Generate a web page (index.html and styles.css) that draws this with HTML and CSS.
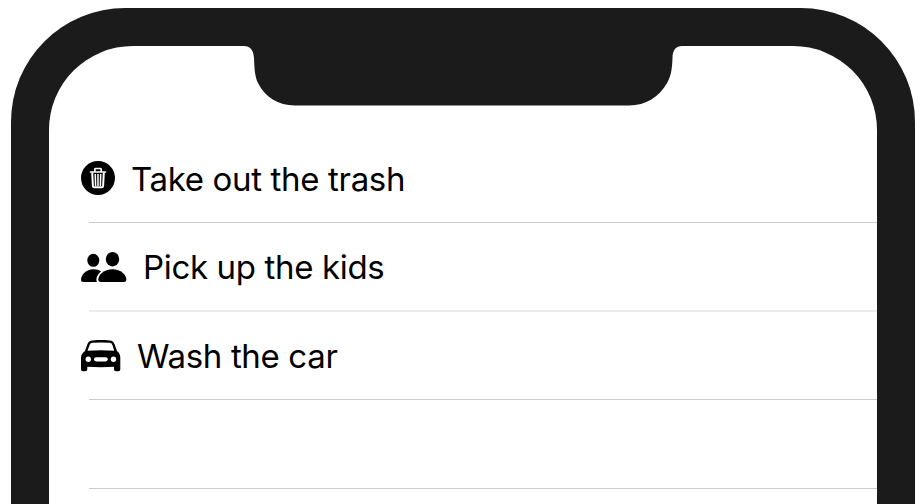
FILE: index.html
```
<!DOCTYPE html>
<html lang="en">
<head>
    <meta charset="UTF-8">
    <meta name="viewport" content="width=device-width, initial-scale=1.0">
    <title>Chores</title>
    <link rel="stylesheet" href="styles.css">
</head>
<body>
    <div class="phone">
        <div class="screen">
            <svg class="notch" width="440" height="60" viewBox="0 0 440 60">
                <path d="M0 0C6 0 9.500 4 10 12C10.500 24 11 31 14 37C21 51 34 59.500 51 59.500H385C402 59.500 415 51 423 37C427 30 428 24 428.500 12C428.500 4 432 0 438 0Z"/>
            </svg>
            <ul class="list">
                <li class="row">
                    <svg class="icon trash" width="34" height="34" viewBox="0 0 34 34">
                        <circle cx="17" cy="17" r="17"/>
                        <g fill="none" stroke="#fff" stroke-linejoin="round">
                            <path stroke-width="1.700" stroke-linecap="round" d="M9.500 11H24.500M13.800 10.500V8.300Q13.800 7.500 14.600 7.500H19.400Q20.200 7.500 20.200 8.300V10.500"/>
                            <path stroke-width="2" d="M11.200 11.500L11.900 25Q12 26.300 13.200 26.300H20.800Q22 26.300 22.100 25L22.800 11.500"/>
                            <path stroke-width="1.500" d="M14.300 13L14.600 25M17 13V25M19.700 13L19.400 25"/>
                        </g>
                    </svg>
                    <span class="label">Take out the trash</span>
                </li>
                <li class="row light">
                    <svg class="icon" width="46" height="31" viewBox="0 0 46 31">
                        <ellipse cx="12.300" cy="8.300" rx="6" ry="6.500"/>
                        <ellipse cx="31.500" cy="7.200" rx="6.700" ry="7.200"/>
                        <path d="M12.500 17.300C15.500 17.300 18 18 20 19.400C17.200 21.600 15.500 24.500 15.400 27.300C15.300 28.400 15.500 29.300 16 30H2.300C.8 30 0 29.300 0 28C0 23 5 17.300 12.500 17.300Z"/>
                        <path d="M31.500 17.200C40 17.200 45.300 23 45.300 27.500C45.300 29.200 44.500 30 42.800 30H20.200C18.300 30 17.300 29.200 17.300 27.500C17.300 23 23 17.200 31.500 17.200Z"/>
                    </svg>
                    <span class="label">Pick up the kids</span>
                </li>
                <li class="row">
                    <svg class="icon" width="40" height="32" viewBox="0 0 40 32">
                        <path fill-rule="evenodd" d="M4 11L6.300 4.500C7.300 1.800 8.700.5 11.500.4C17 0 23 0 28.500.4C31.300.5 32.700 1.800 33.700 4.500L36 11C38 12.800 39.300 14.500 39.300 17.500V29.300C39.300 30.500 38.500 31.300 37.300 31.300H35C33.800 31.300 33 30.500 33 29.300V26.800Q19.600 27.500 6.300 26.800V29.300C6.300 30.500 5.500 31.300 4.300 31.300H2C.8 31.300 0 30.500 0 29.300V17.500C0 14.500 2 12.800 4 11ZM6.500 10.700Q20 9.800 33.200 10.700L31.400 5Q30.700 2.900 28.400 2.800Q20 2.300 11.600 2.800Q9.300 2.900 8.600 5Z"/>
                        <g fill="#fff">
                            <circle cx="7.300" cy="19.300" r="2.700"/>
                            <circle cx="32.500" cy="19.300" r="2.700"/>
                            <rect x="13" y="17.200" width="13.800" height="4.300" rx="2.150"/>
                        </g>
                    </svg>
                    <span class="label">Wash the car</span>
                </li>
                <li class="row"></li>
            </ul>
        </div>
    </div>
</body>
</html>
```
FILE: styles.css
```
body {
    margin: 0;
    background-color: #fff;
    font-family: Inter, "Liberation Sans", sans-serif;
}
.phone {
    display: flow-root;
    box-sizing: border-box;
    width: 904px;
    height: 496px;
    margin: 8px 0 0 11px;
    padding: 38px 38px 0;
    background-color: #1b1b1b;
    border-radius: 114px 114px 0 0;
}
.screen {
    height: 458px;
    background-color: #fff;
    border-radius: 84px 84px 0 0;
}
.notch {
    display: block;
    margin-left: 195px;
    fill: #1b1b1b;
}
.list {
    list-style: none;
    margin: 28px 0 0;
    padding: 0 0 0 32px;
}
.row {
    box-sizing: border-box;
    display: flex;
    align-items: center;
    height: 89px;
    background: linear-gradient(#cbcbcb, #cbcbcb) 8px 100% / 100% 1px no-repeat;
}
.row.light {
    height: 88px;
    background: none;
}
.row.light + .row {
    background:
        linear-gradient(#ebebeb, #ebebeb) 8px 0 / 100% 2px no-repeat,
        linear-gradient(#cbcbcb, #cbcbcb) 8px 100% / 100% 1px no-repeat;
    margin-top: -1px;
    padding-top: 2px;
    height: 90px;
}
.icon {
    flex: none;
    fill: #000;
}
.icon.trash {
    margin-top: -1px;
}
.label {
    margin-left: 16px;
    font-size: 33px;
    line-height: 40px;
    letter-spacing: -0.34px;
    color: #000;
    white-space: nowrap;
}
```
